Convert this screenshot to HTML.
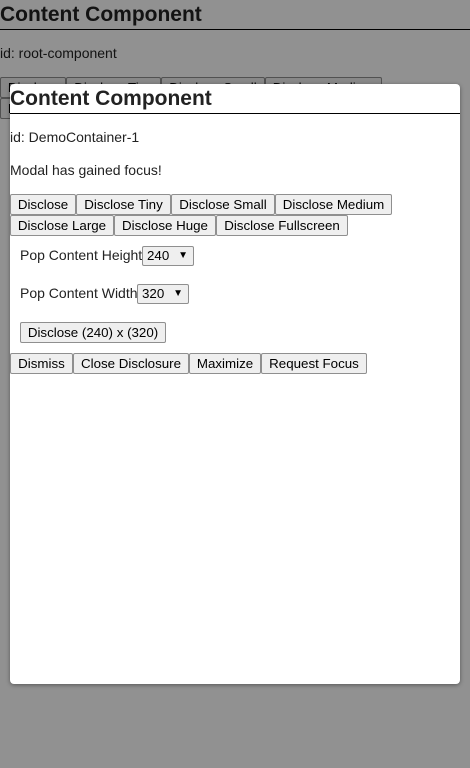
<!DOCTYPE html>
<html><head><style>
*{box-sizing:border-box;margin:0;padding:0}
body{width:470px;height:768px;background:#fff;font-family:"Liberation Sans",sans-serif;position:relative;overflow:hidden;color:#000}
.a{position:absolute}
.b{position:absolute;height:21px;background:#efefef;border:1px solid #8f8f8f;border-radius:2px;font-size:13.33px;line-height:19px;text-align:center;color:#000;white-space:nowrap}
.t{font-size:14px;white-space:nowrap;color:#222}
h1{font-size:21px;font-weight:bold;white-space:nowrap;color:#222}
.sel{position:absolute;height:20px;background:#efefef;border:1px solid #8f8f8f;border-radius:2px;font-size:13.33px;line-height:18px;padding-left:4px}
.sel span{position:absolute;right:5px;top:0;font-size:10px}
#ov{position:absolute;left:0;top:0;width:470px;height:768px;background:rgba(0,0,0,0.43)}
#m{position:absolute;left:10px;top:84px;width:450px;height:600px;background:#fff;border-radius:4px;box-shadow:0 1px 4px rgba(0,0,0,.4);overflow:hidden}
</style></head><body>
<h1 class="a" style="left:0;top:3px">Content Component</h1>
<div class="a" style="left:0;top:29px;width:470px;height:1px;background:#000"></div>
<div class="a t" style="left:0;top:45px">id: root-component</div>
<div class="b" style="left:0;top:77px;width:66px">Disclose</div>
<div class="b" style="left:66px;top:77px;width:95px">Disclose Tiny</div>
<div class="b" style="left:161px;top:77px;width:104px">Disclose Small</div>
<div class="b" style="left:265px;top:77px;width:117px">Disclose Medium</div>
<div class="b" style="left:0;top:98px;width:104px">Disclose Large</div>
<div id="ov"></div>
<div id="m">
<h1 class="a" style="left:0;top:3px">Content Component</h1>
<div class="a" style="left:0;top:29px;width:450px;height:1px;background:#000"></div>
<div class="a t" style="left:0;top:45px">id: DemoContainer-1</div>
<div class="a t" style="left:0;top:78px">Modal has gained focus!</div>
<div class="b" style="left:0;top:110px;width:66px">Disclose</div>
<div class="b" style="left:66px;top:110px;width:95px">Disclose Tiny</div>
<div class="b" style="left:161px;top:110px;width:104px">Disclose Small</div>
<div class="b" style="left:265px;top:110px;width:117px">Disclose Medium</div>
<div class="b" style="left:0;top:131px;width:104px">Disclose Large</div>
<div class="b" style="left:104px;top:131px;width:102px">Disclose Huge</div>
<div class="b" style="left:206px;top:131px;width:132px">Disclose Fullscreen</div>
<div class="a t" style="left:10px;top:163px">Pop Content Height</div>
<div class="sel" style="left:132px;top:162px;width:52px">240<span>▼</span></div>
<div class="a t" style="left:10px;top:201px">Pop Content Width</div>
<div class="sel" style="left:127px;top:200px;width:52px">320<span>▼</span></div>
<div class="b" style="left:10px;top:238px;width:146px">Disclose (240) x (320)</div>
<div class="b" style="left:0;top:269px;width:63px">Dismiss</div>
<div class="b" style="left:63px;top:269px;width:116px">Close Disclosure</div>
<div class="b" style="left:179px;top:269px;width:72px">Maximize</div>
<div class="b" style="left:251px;top:269px;width:106px">Request Focus</div>
</div>
</body></html>
